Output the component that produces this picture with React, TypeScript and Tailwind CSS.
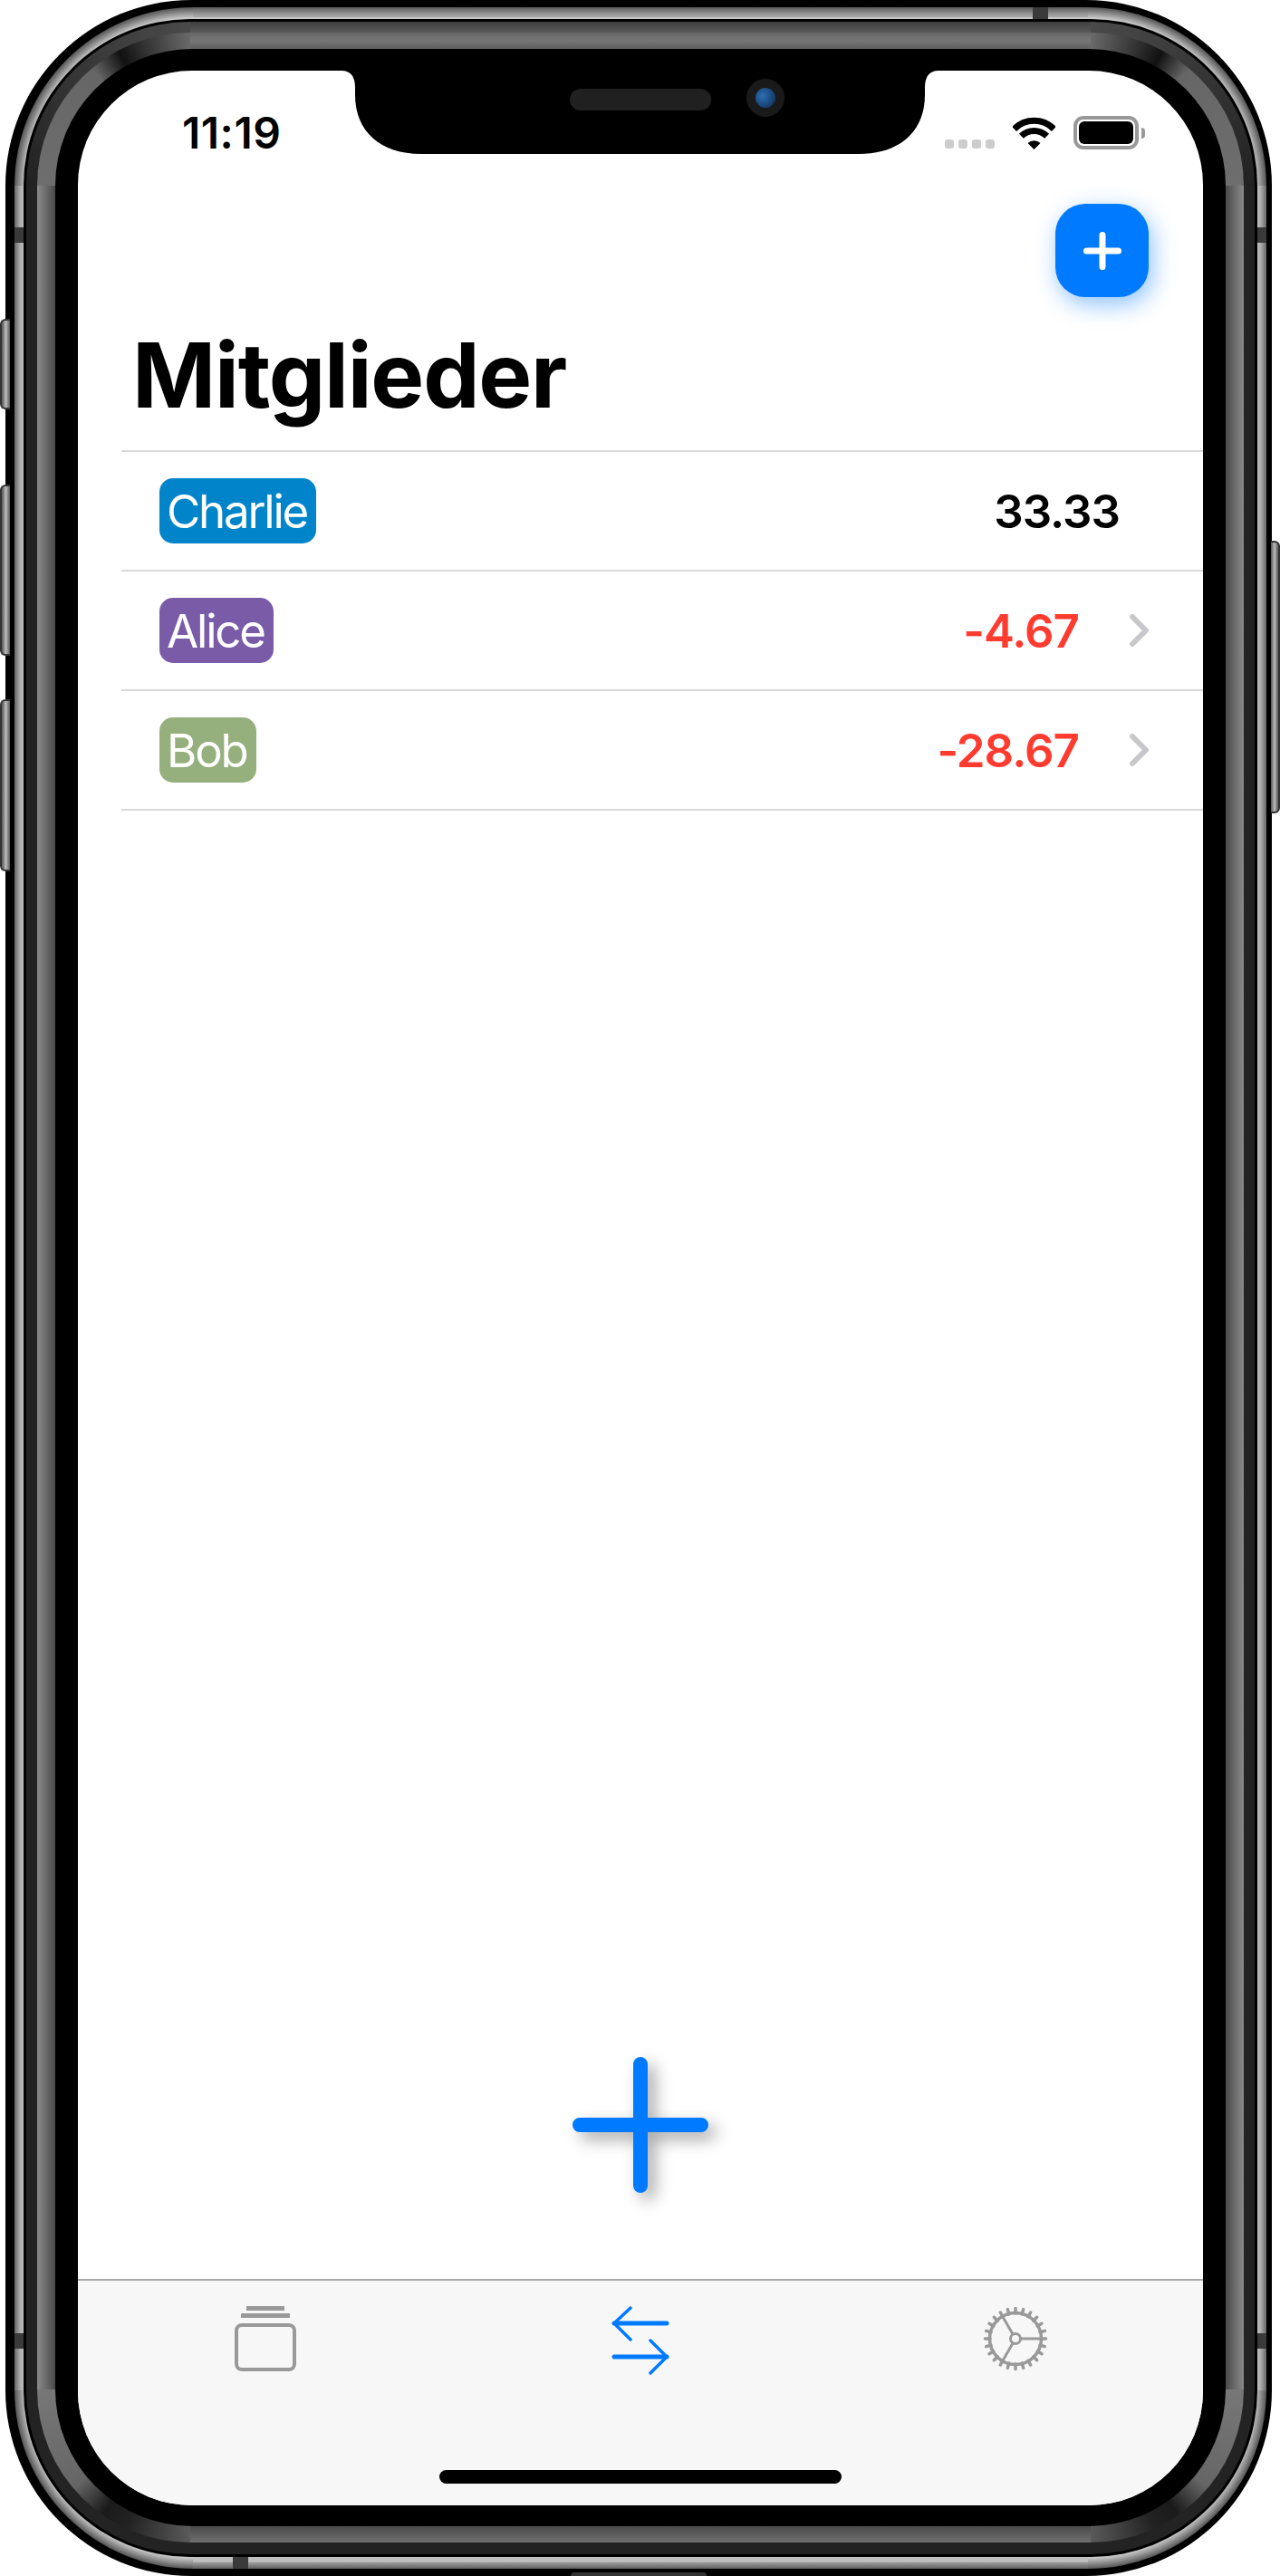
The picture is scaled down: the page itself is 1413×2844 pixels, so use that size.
const members = [
  { name: "Charlie", color: "bg-[#0284ca]", amount: "33.33", negative: false, link: false },
  { name: "Alice", color: "bg-[#7a5ba8]", amount: "-4.67", negative: true, link: true },
  { name: "Bob", color: "bg-[#95b07d]", amount: "-28.67", negative: true, link: true },
];

const teeth = Array.from({ length: 24 }, (_, i) => i * 15);

function WifiIcon() {
  return (
    <svg width="47" height="36" viewBox="0 0 47 36" fill="none" className="ml-[20px]">
      <path d="M1.6 13.4A31 31 0 0 1 45.4 13.4" stroke="#000" strokeWidth="7" />
      <path d="M9.4 21.2A20 20 0 0 1 37.6 21.2" stroke="#000" strokeWidth="7" />
      <path d="M23.5 36L16.5 29A10 10 0 0 1 30.5 29Z" fill="#000" />
    </svg>
  );
}

function Battery() {
  return (
    <div className="ml-[20px] flex items-center">
      <div className="h-[37px] w-[72px] rounded-[11px] border-[4px] border-[#999] p-[2px]">
        <div className="h-full w-full rounded-[6px] bg-black" />
      </div>
      <div className="ml-[3px] h-[12px] w-[4px] rounded-r-[4px] bg-[#999]" />
    </div>
  );
}

function Chevron() {
  return (
    <svg width="21" height="36" viewBox="0 0 21 36" fill="none" className="ml-[56px]">
      <path d="M3 3L18 18L3 33" stroke="#c7c7cc" strokeWidth="6" strokeLinecap="round" strokeLinejoin="round" />
    </svg>
  );
}

function GearIcon() {
  return (
    <svg width="72" height="72" viewBox="0 0 72 72" fill="none" stroke="#999">
      <circle cx="36" cy="36" r="28.5" strokeWidth="3.5" />
      <circle cx="36" cy="36" r="5.5" strokeWidth="3" />
      <path d="M41.5 36H65M33.2 31.2L21.5 10.9M33.2 40.8L21.5 61.1" strokeWidth="3" />
      {teeth.map((deg) => (
        <path
          key={deg}
          d="M36 2.5V8"
          strokeWidth="3.5"
          strokeLinecap="round"
          transform={`rotate(${deg} 36 36)`}
        />
      ))}
    </svg>
  );
}

function Notch() {
  return (
    <svg
      width="659"
      height="92"
      viewBox="377 78 659 92"
      className="absolute left-[291px] top-0"
    >
      <path
        d="M377 78Q392 78 392 97V105C392 145 420 170 465 170H948C993 170 1021 145 1021 105V97Q1021 78 1036 78Z"
        fill="#000"
      />
    </svg>
  );
}

export default function App() {
  return (
    <div className="relative h-[2844px] w-[1413px] bg-white pl-[6px] pr-[9px] font-['Inter',sans-serif]">
      {/* side buttons */}
      <div className="absolute left-0 top-[352px] z-10 h-[100px] w-[11px] rounded-l-[6px] border-y-2 border-l-2 border-[#333] bg-[linear-gradient(to_right,#555,#bbb_50%,#555)]" />
      <div className="absolute left-0 top-[535px] z-10 h-[189px] w-[11px] rounded-l-[6px] border-y-2 border-l-2 border-[#333] bg-[linear-gradient(to_right,#555,#bbb_50%,#555)]" />
      <div className="absolute left-0 top-[772px] z-10 h-[190px] w-[11px] rounded-l-[6px] border-y-2 border-l-2 border-[#333] bg-[linear-gradient(to_right,#555,#bbb_50%,#555)]" />
      <div className="absolute right-0 top-[597px] z-10 h-[301px] w-[10px] rounded-r-[6px] border-y-2 border-r-2 border-[#333] bg-[linear-gradient(to_right,#555,#bbb_50%,#555)]" />

      <div className="relative flex h-full rounded-[205px] bg-black py-[8px] pl-[10px] pr-[6px]">
        {/* outer bright edge */}
        <div className="flex-1 rounded-[197px] pb-[13px] pl-[10px] pr-[10px] pt-[13px] [background:radial-gradient(circle_at_100%_100%,#c8c8c8_185px,#555_197px)_0_0/197px_197px_no-repeat,radial-gradient(circle_at_0_100%,#c8c8c8_185px,#555_197px)_100%_0/197px_197px_no-repeat,radial-gradient(circle_at_100%_0,#c8c8c8_185px,#555_197px)_0_100%/197px_197px_no-repeat,radial-gradient(circle_at_0_0,#c8c8c8_185px,#555_197px)_100%_100%/197px_197px_no-repeat,linear-gradient(to_bottom,#5a5a5a,#999_60%,#a8a8a8_82%,#c8c8c8_84%)_0_0/100%_13px_no-repeat,linear-gradient(to_bottom,#c0c0c0_38%,#999_50%,#5e5e5e)_0_100%/100%_13px_no-repeat,linear-gradient(to_right,#666,#aaa_60%,#c0c0c0)_0_0/10px_100%_no-repeat,linear-gradient(to_right,#c0c0c0,#aaa_40%,#666)_100%_0/10px_100%_no-repeat]">
          <div className="h-full rounded-[184px] bg-black p-[3px]">
            {/* dark band */}
            <div className="h-full rounded-[181px] pb-[13px] pl-[12px] pr-[12px] pt-[12px] [background:conic-gradient(from_270deg_at_100%_100%,#222,#4a4a4a_90deg)_0_0/181px_181px_no-repeat,conic-gradient(from_0deg_at_0_100%,#4a4a4a,#222_90deg)_100%_0/181px_181px_no-repeat,linear-gradient(to_bottom,#3e3e3e,#5a5a5a)_0_0/100%_12px_no-repeat,#232323]">
              {/* inner gray band */}
              <div className="h-full rounded-[169px] px-[20px] py-[18px] [background:conic-gradient(from_270deg_at_100%_100%,#6e6e6e,#666_50deg,#111_62deg,#333_72deg,#6a6a6a_90deg)_0_0/169px_169px_no-repeat,conic-gradient(from_0deg_at_0_100%,#6a6a6a,#333_18deg,#111_28deg,#666_40deg,#6e6e6e_90deg)_100%_0/169px_169px_no-repeat,conic-gradient(from_180deg_at_100%_0,#5a5a5a,#222_25deg,#1a1a1a_35deg,#666_50deg,#777_90deg)_0_100%/169px_169px_no-repeat,conic-gradient(from_90deg_at_0_0,#777,#666_40deg,#1a1a1a_55deg,#222_65deg,#5a5a5a_90deg)_100%_100%/169px_169px_no-repeat,linear-gradient(to_bottom,#666,#777_50%,#5e5e5e)_0_0/100%_18px_no-repeat,linear-gradient(to_bottom,#4a4a4a,#707070)_0_100%/100%_18px_no-repeat,linear-gradient(to_right,#8a8a8a,#4a4a4a)_0_0/20px_100%_no-repeat,linear-gradient(to_right,#4a4a4a,#8a8a8a)_100%_0/20px_100%_no-repeat]">
                <div className="h-full rounded-[151px] bg-black pb-[23px] pl-[25px] pr-[25px] pt-[24px]">
                  {/* screen */}
                  <div className="relative flex h-full flex-col overflow-hidden rounded-[126px] bg-white">
                    <Notch />

                    <div className="flex h-[147px] items-start justify-between pl-[115px] pr-[64px] pt-[50px]">
                      <span className="text-[48px] font-semibold leading-[37px] tracking-[0.5px] text-black">
                        11:19
                      </span>
                      <div className="flex items-end">
                        <div className="mb-[1px] flex gap-[5px]">
                          <span className="h-[10px] w-[10px] rounded-[3px] bg-[#ccc]" />
                          <span className="h-[10px] w-[10px] rounded-[3px] bg-[#ccc]" />
                          <span className="h-[10px] w-[10px] rounded-[3px] bg-[#ccc]" />
                          <span className="h-[10px] w-[10px] rounded-[3px] bg-[#ccc]" />
                        </div>
                        <WifiIcon />
                        <Battery />
                      </div>
                    </div>

                    <div className="flex justify-end pr-[60px]">
                      <button className="flex h-[103px] w-[103px] items-center justify-center rounded-[33px] bg-[#007aff] shadow-[4px_8px_26px_rgba(0,122,255,0.45)]">
                        <svg width="42" height="42" viewBox="0 0 42 42" fill="none">
                          <path d="M21 3.5V38.5M3.5 21H38.5" stroke="#fff" strokeWidth="7" strokeLinecap="round" />
                        </svg>
                      </button>
                    </div>

                    <h1 className="h-[169px] pl-[60px] pt-[26px] text-[99px] font-bold leading-[120px] tracking-[-1.2px] text-black">
                      Mitglieder
                    </h1>

                    <div className="ml-[48px] border-b-2 border-[#d8d8d8]">
                      {members.map((m) => (
                        <div
                          key={m.name}
                          className={`flex h-[132px] items-center border-t-2 border-[#d8d8d8] pl-[42px] ${
                            m.link ? "pr-[60px]" : "pr-[92px]"
                          }`}
                        >
                          <span
                            className={`flex h-[72px] items-center rounded-[15px] pl-[8px] pr-[10px] text-[51px] leading-none tracking-[-2.2px] text-white ${m.color}`}
                          >
                            {m.name}
                          </span>
                          <span
                            className={`ml-auto text-[51px] font-semibold leading-none tracking-[-1px] ${
                              m.negative ? "text-[#ff3b30]" : "text-black"
                            }`}
                          >
                            {m.amount}
                          </span>
                          {m.link && <Chevron />}
                        </div>
                      ))}
                    </div>

                    <div className="flex flex-1 items-end justify-center pb-[95px]">
                      <svg
                        width="150"
                        height="150"
                        viewBox="0 0 150 150"
                        fill="none"
                        className="overflow-visible drop-shadow-[8px_8px_9px_rgba(0,0,0,0.35)]"
                      >
                        <path d="M75 8V142M8 75H142" stroke="#007aff" strokeWidth="16" strokeLinecap="round" />
                      </svg>
                    </div>

                    <div className="h-[250px] border-t-2 border-[#aaa] bg-[#f7f7f7]">
                      <div className="grid h-[209px] grid-cols-3 pt-[28px]">
                        <div className="flex justify-center">
                          <div className="flex w-[68px] flex-col items-center">
                            <span className="h-[5px] w-[42px] bg-[#999]" />
                            <span className="mt-[3px] h-[5px] w-[54px] bg-[#999]" />
                            <span className="mt-[6px] h-[53px] w-[68px] rounded-[8px] border-[4px] border-[#999]" />
                          </div>
                        </div>
                        <div className="flex justify-center">
                          <svg width="64" height="76" viewBox="0 0 64 76" fill="none" stroke="#007aff" strokeLinecap="round" strokeLinejoin="round">
                            <path d="M3 19H61" strokeWidth="5" />
                            <path d="M21 2L3 19L21 37" strokeWidth="3.5" />
                            <path d="M61 56H3" strokeWidth="5" />
                            <path d="M43 38L61 56L43 74" strokeWidth="3.5" />
                          </svg>
                        </div>
                        <div className="flex justify-center">
                          <GearIcon />
                        </div>
                      </div>
                      <div className="mx-auto h-[15px] w-[444px] rounded-full bg-black" />
                    </div>
                  </div>
                </div>
              </div>
            </div>
          </div>
        </div>

        {/* antenna lines and bottom speaker */}
        <div className="absolute left-[10px] top-[251px] h-[17px] w-[10px] bg-[#3a3a3a]" />
        <div className="absolute left-[10px] top-[2576px] h-[17px] w-[10px] bg-[#3a3a3a]" />
        <div className="absolute right-[6px] top-[251px] h-[17px] w-[10px] bg-[#3a3a3a]" />
        <div className="absolute right-[6px] top-[2576px] h-[17px] w-[10px] bg-[#3a3a3a]" />
        <div className="absolute left-[1134px] top-[8px] h-[13px] w-[17px] bg-[#3a3a3a]" />
        <div className="absolute left-[251px] bottom-[8px] h-[13px] w-[17px] bg-[#3a3a3a]" />
        <div className="absolute bottom-0 left-[624px] h-[4px] w-[150px] rounded-t-[6px] bg-[#333]" />

        {/* earpiece and camera in the notch */}
        <div className="absolute left-[623px] top-[98px] h-[24px] w-[156px] rounded-full bg-[#202020]" />
        <div className="absolute left-[818px] top-[87px] flex h-[42px] w-[42px] items-center justify-center rounded-full bg-[#1a1a1a]">
          <div className="h-[22px] w-[22px] rounded-full bg-[radial-gradient(circle_at_35%_40%,#2f6fb5,#123a66_75%)]" />
        </div>
      </div>
    </div>
  );
}
